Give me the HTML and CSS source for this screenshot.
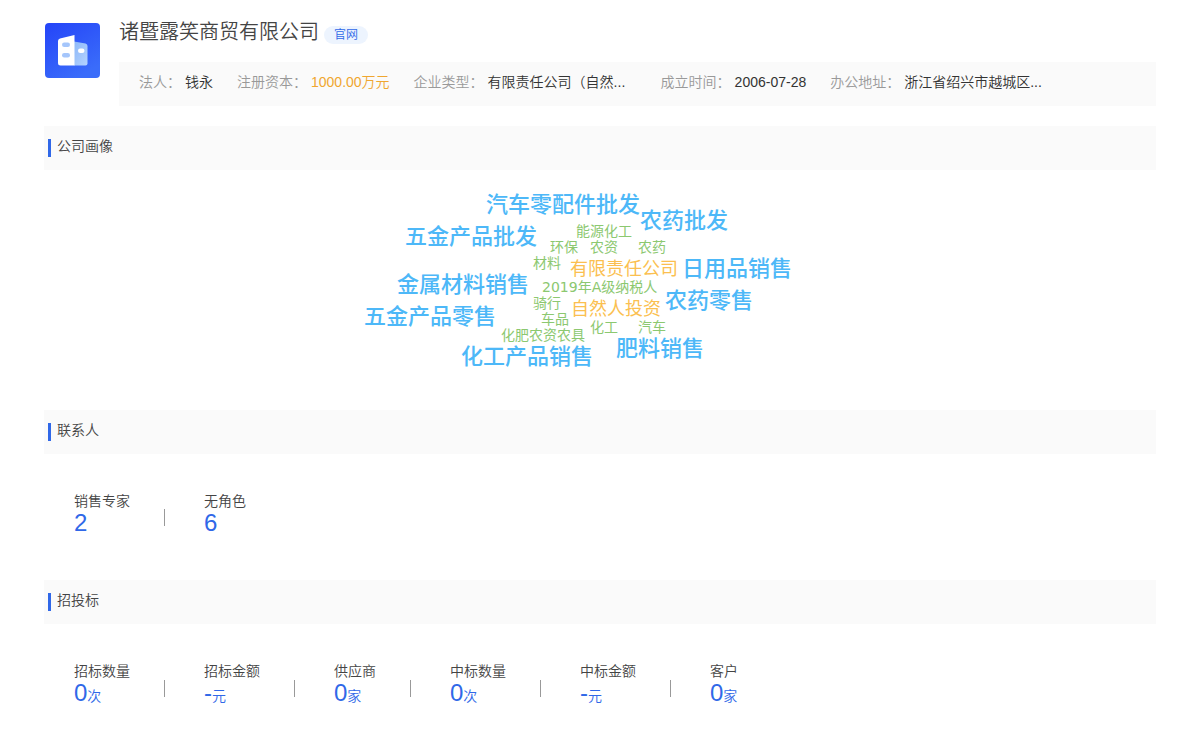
FILE: index.html
```html
<!DOCTYPE html>
<html lang="zh-CN">
<head>
<meta charset="utf-8">
<meta name="viewport" content="width=device-width, initial-scale=1">
<title>诸暨露笑商贸有限公司</title>
<link rel="stylesheet" href="styles.css">
</head>
<body>
<main class="page">
  <header class="company">
    <svg class="company-logo" viewBox="0 0 55 55" aria-hidden="true">
      <defs>
        <linearGradient id="logo-bg" x1="0" y1="0" x2="0.6" y2="1">
          <stop offset="0" stop-color="#2444f8"/>
          <stop offset="1" stop-color="#3a6cfa"/>
        </linearGradient>
        <linearGradient id="logo-side" x1="0" y1="0" x2="1" y2="1">
          <stop offset="0" stop-color="#8db8f8"/>
          <stop offset="1" stop-color="#b4d3ff"/>
        </linearGradient>
      </defs>
      <rect width="55" height="55" rx="4" fill="url(#logo-bg)"/>
      <path d="M29 18.500 40.500 20.500Q42.500 21 42.500 23V40.500Q42.500 42.500 40.500 42.500H29Z" fill="url(#logo-side)"/>
      <path d="M15 15.500 29.500 12V42.500H15.500Q13 42.500 13 40V18Q13 16 15 15.500Z" fill="#fff"/>
      <rect x="17" y="19.500" width="8" height="4.500" rx="2.200" fill="#a5c6fb"/>
      <rect x="17" y="30" width="8" height="4.500" rx="2.200" fill="#a5c6fb"/>
      <rect x="33" y="25.500" width="6.500" height="4.500" rx="2.200" fill="#fff"/>
    </svg>
    <div class="company-main">
      <div class="company-title">
        <h1 class="company-name">诸暨露笑商贸有限公司</h1>
        <a class="badge" href="#">官网</a>
      </div>
      <dl class="info">
        <div class="info-item"><dt>法人：</dt><dd>钱永</dd></div>
        <div class="info-item"><dt>注册资本：</dt><dd class="money">1000.00万元</dd></div>
        <div class="info-item"><dt>企业类型：</dt><dd class="long">有限责任公司（自然...</dd></div>
        <div class="info-item"><dt>成立时间：</dt><dd>2006-07-28</dd></div>
        <div class="info-item"><dt>办公地址：</dt><dd class="long">浙江省绍兴市越城区...</dd></div>
      </dl>
    </div>
  </header>

  <section>
    <h2 class="section-title">公司画像</h2>
    <div class="portrait">
      <div class="cloud">
        <span class="word business w1">汽车零配件批发</span>
        <span class="word business w2">农药批发</span>
        <span class="word business w3">五金产品批发</span>
        <span class="word business w4">日用品销售</span>
        <span class="word business w5">金属材料销售</span>
        <span class="word business w6">农药零售</span>
        <span class="word business w7">五金产品零售</span>
        <span class="word business w8">肥料销售</span>
        <span class="word business w9">化工产品销售</span>
        <span class="word nature w10">有限责任公司</span>
        <span class="word nature w11">自然人投资</span>
        <span class="word tag w12">能源化工</span>
        <span class="word tag w13">环保</span>
        <span class="word tag w14">农资</span>
        <span class="word tag w15">农药</span>
        <span class="word tag w16">材料</span>
        <span class="word tag w17">2019年A级纳税人</span>
        <span class="word tag w18">骑行</span>
        <span class="word tag w19">车品</span>
        <span class="word tag w20">化工</span>
        <span class="word tag w21">汽车</span>
        <span class="word tag w22">化肥农资农具</span>
      </div>
    </div>
  </section>

  <section>
    <h2 class="section-title">联系人</h2>
    <dl class="stats">
      <div class="stat"><dt>销售专家</dt><dd>2</dd></div>
      <div class="stat"><dt>无角色</dt><dd>6</dd></div>
    </dl>
  </section>

  <section>
    <h2 class="section-title">招投标</h2>
    <dl class="stats">
      <div class="stat"><dt>招标数量</dt><dd>0<small>次</small></dd></div>
      <div class="stat"><dt>招标金额</dt><dd>-<small>元</small></dd></div>
      <div class="stat"><dt>供应商</dt><dd>0<small>家</small></dd></div>
      <div class="stat"><dt>中标数量</dt><dd>0<small>次</small></dd></div>
      <div class="stat"><dt>中标金额</dt><dd>-<small>元</small></dd></div>
      <div class="stat"><dt>客户</dt><dd>0<small>家</small></dd></div>
    </dl>
  </section>
</main>
</body>
</html>
```

FILE: styles.css
```css
* {
  box-sizing: border-box;
}

body {
  margin: 0;
  background: #fff;
  color: #444;
  font: 350 14px/20px "Liberation Sans", "Noto Sans CJK SC", sans-serif;
}

h1, h2, dl, dd {
  margin: 0;
  font-weight: inherit;
}

.page {
  padding: 18px 44px 0;
}

/* Company header */
.company {
  display: flex;
  gap: 19px;
  margin-bottom: 20px;
  padding-left: 1px;
}

.company-logo {
  flex: none;
  width: 55px;
  height: 55px;
  margin-top: 5px;
}

.company-main {
  flex: 1;
  min-width: 0;
}

.company-title {
  display: flex;
  align-items: flex-end;
  gap: 5px;
  height: 26px;
  margin-bottom: 18px;
}

.company-name {
  font-size: 20px;
  line-height: 24px;
}

.badge {
  padding: 0 10px;
  border-radius: 9px;
  background: #edf4fe;
  color: #3068e8;
  font-size: 12px;
  line-height: 18px;
  text-decoration: none;
}

.info {
  display: flex;
  gap: 24px;
  padding: 10px 20px 14px;
  background: #fafafa;
}

.info-item {
  display: flex;
  gap: 4px;
  white-space: nowrap;
}

.info-item dt {
  color: #999;
}

.info-item dd {
  color: #333;
}

.info-item .money {
  color: #f0a62f;
}

.info-item .long {
  width: 149px;
}

/* Sections */
.section-title {
  display: flex;
  align-items: center;
  gap: 6px;
  height: 44px;
  padding: 0 4px 4px;
  background: #fafafa;
  font-size: 14px;
}

.section-title::before {
  content: "";
  width: 3px;
  height: 18px;
  margin-top: 4px;
  background: #3068e8;
}

/* Word cloud */
.portrait {
  display: flex;
  justify-content: center;
}

.cloud {
  position: relative;
  width: 480px;
  height: 240px;
}

.word {
  position: absolute;
  font-family: "DejaVu Sans", "Noto Sans CJK SC", sans-serif;
  font-weight: 400;
  line-height: 24px;
  white-space: nowrap;
}

.business { color: #4db8f8; font-size: 22px; font-weight: 500; }
.nature { color: #fbbf50; font-size: 18px; }
.tag { color: #8cc870; font-size: 14px; }

.w1 { left: 126px; top: 23px; }
.w2 { left: 280px; top: 39px; }
.w3 { left: 45px; top: 55px; }
.w4 { left: 322px; top: 87px; }
.w5 { left: 37px; top: 103px; }
.w6 { left: 305px; top: 119px; }
.w7 { left: 4px; top: 135px; }
.w8 { left: 256px; top: 167px; }
.w9 { left: 101px; top: 175px; }
.w10 { left: 210px; top: 87px; }
.w11 { left: 211px; top: 127px; }
.w12 { left: 216px; top: 49px; }
.w13 { left: 190px; top: 65px; }
.w14 { left: 230px; top: 65px; }
.w15 { left: 278px; top: 65px; }
.w16 { left: 173px; top: 81px; }
.w17 { left: 182px; top: 105px; }
.w18 { left: 173px; top: 121px; }
.w19 { left: 181px; top: 137px; }
.w20 { left: 230px; top: 145px; }
.w21 { left: 278px; top: 145px; }
.w22 { left: 141px; top: 153px; }

/* Figures */
.stats {
  display: flex;
  padding: 37px 30px 45px;
}

.stat {
  display: grid;
  grid-template-columns: auto 1px;
  column-gap: 34px;
  margin-right: 39px;
}

.stat dd {
  grid-column: 1;
  color: #3068e8;
  font-size: 24px;
  line-height: 24px;
}

.stat small {
  font-size: 14px;
}

.stat:not(:last-child)::after {
  content: "";
  grid-area: 1 / 2 / span 2;
  align-self: center;
  height: 17px;
  margin-top: 8px;
  background: #999;
}
```
